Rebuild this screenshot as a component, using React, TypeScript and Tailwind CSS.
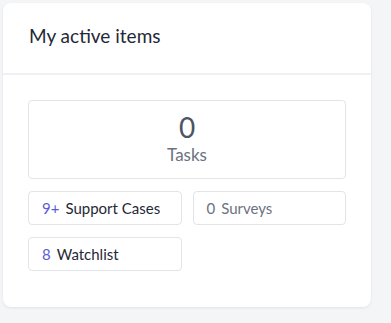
import React from 'react';

const Stat: React.FC<{ count: string; label: string; muted?: boolean }> = ({ count, label, muted }) => (
  <div className="h-[34px] flex items-center px-[13px] border border-[#e2e4e8] rounded-[4px] bg-white text-[15px]">
    <span className={muted ? 'text-[#6b7280]' : 'text-[#5b5bd6]'}>{count}</span>
    <span className={`ml-[6px] ${muted ? 'text-[#6b7280]' : 'text-[#1f2937]'}`}>{label}</span>
  </div>
);

const App: React.FC = () => {
  return (
    <div className="w-[391px] h-[323px] bg-[#f4f5f7] pt-[3px] pl-[3px] font-['Lato',sans-serif]">
      <div className="w-[368px] h-[304px] bg-white rounded-[8px] shadow-[0_1px_3px_rgba(0,0,0,0.08)]">
        {/* Header */}
        <div className="h-[72px] flex items-center px-[26px] border-b-2 border-[#eef0f2]">
          <h2 className="text-[19px] text-[#1f2937] leading-none -mt-[6px]">My active items</h2>
        </div>

        {/* Body */}
        <div className="px-[25px] pt-[25px]">
          <div className="h-[79px] flex flex-col items-center justify-center border border-[#e2e4e8] rounded-[4px]">
            <div className="text-[28px] leading-none text-[#4b5563] -mt-[3px]">0</div>
            <div className="text-[17px] leading-none mt-[5px] text-[#6b7280]">Tasks</div>
          </div>

          <div className="grid grid-cols-2 gap-x-[11px] gap-y-3 mt-3">
            <Stat count="9+" label="Support Cases" />
            <Stat count="0" label="Surveys" muted />
            <Stat count="8" label="Watchlist" />
          </div>
        </div>
      </div>
    </div>
  );
};

export default App;
